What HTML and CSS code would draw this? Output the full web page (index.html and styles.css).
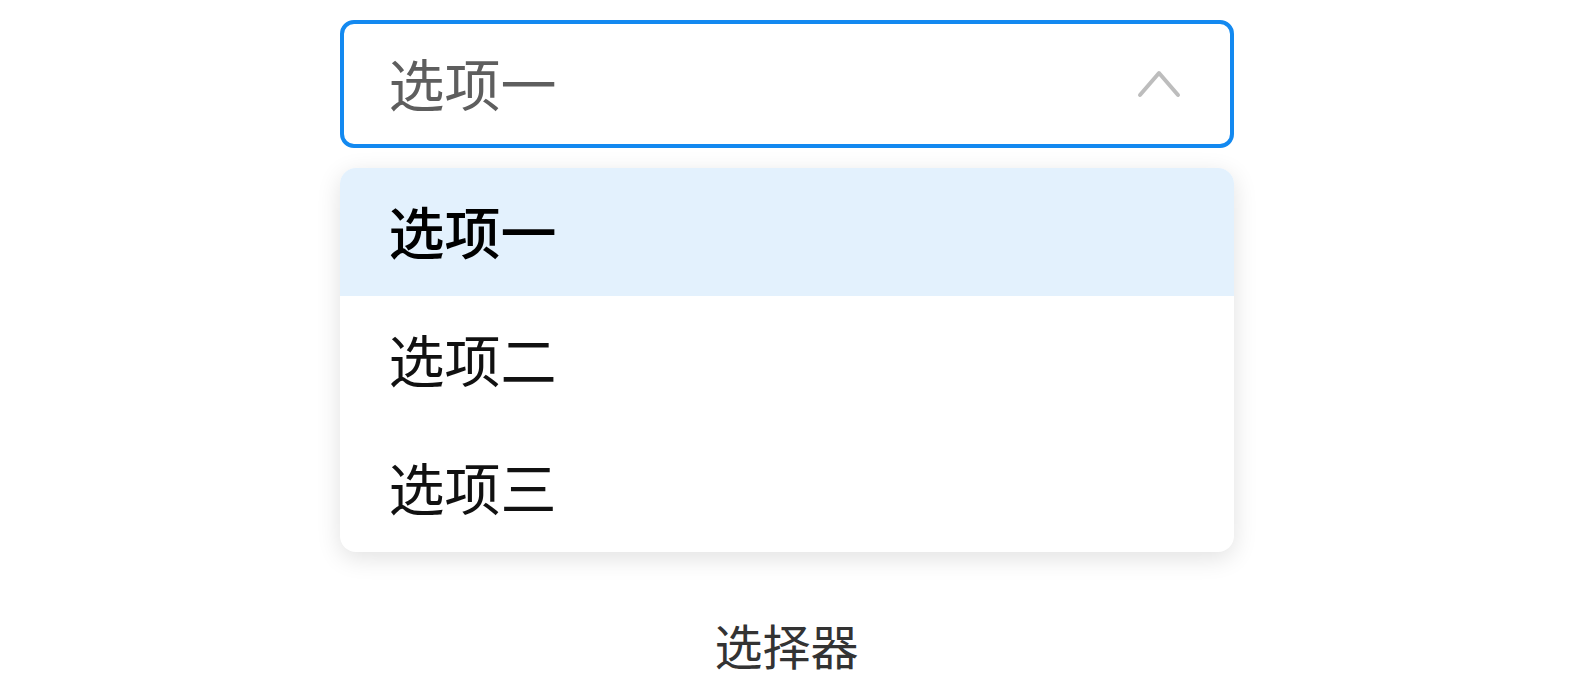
FILE: index.html
```html
<!DOCTYPE html>
<html lang="zh-CN">
<head>
  <meta charset="UTF-8">
  <meta name="viewport" content="width=device-width, initial-scale=1.0">
  <title>选择器</title>
  <link rel="stylesheet" href="styles.css">
</head>
<body>
  <div class="picker">
    <div class="select-box">
      <span class="select-value">选项一</span>
      <svg class="arrow" width="44" height="30" viewBox="0 0 44 30">
        <polyline points="3,26 22,4 41,26" fill="none" stroke="#bdbdbd" stroke-width="4" stroke-linecap="round" stroke-linejoin="round" />
      </svg>
    </div>

    <ul class="options">
      <li class="option active">选项一</li>
      <li class="option">选项二</li>
      <li class="option">选项三</li>
    </ul>

    <div class="caption">选择器</div>
  </div>
</body>
</html>
```

FILE: styles.css
```css
body {
  margin: 0;
  background-color: #ffffff;
  font-family: "Noto Sans CJK SC", "Noto Sans", sans-serif;
}
.picker {
  width: 894px;
  margin: 0 auto;
  padding-top: 20px;
}
.select-box {
  box-sizing: border-box;
  height: 128px;
  display: flex;
  align-items: center;
  justify-content: space-between;
  border: 4px solid #1389f0;
  border-radius: 14px;
  padding: 0 49px 0 45px;
}
.select-value {
  font-size: 56px;
  color: #5e5e5e;
  margin-bottom: 5px;
}
.arrow {
  display: block;
}
.options {
  list-style: none;
  margin: 20px 0 0;
  padding: 0;
  background-color: #ffffff;
  border-radius: 16px;
  overflow: hidden;
  box-shadow: 0 6px 24px rgba(0, 0, 0, 0.12);
}
.option {
  box-sizing: border-box;
  height: 128px;
  display: flex;
  align-items: center;
  padding: 0 0 5px 49px;
  font-size: 56px;
  color: #111111;
}
.option.active {
  background-color: #e3f1fd;
  font-weight: 500;
  color: #000000;
}
.caption {
  margin-top: 56px;
  text-align: center;
  font-size: 48px;
  line-height: 72px;
  color: #333333;
}
```
